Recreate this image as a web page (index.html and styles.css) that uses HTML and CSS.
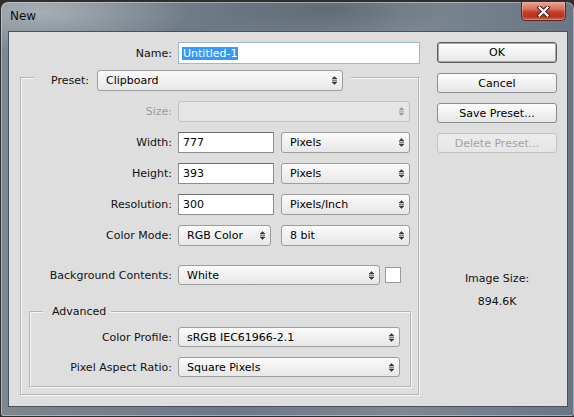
FILE: index.html
```html
<!DOCTYPE html>
<html>
<head>
<meta charset="utf-8">
<title>New</title>
<link rel="stylesheet" href="styles.css">
</head>
<body>
<div class="window">
  <div class="titlebar">
    <span class="title">New</span>
    <div class="close">
      <svg width="13" height="11" viewBox="0 0 13 11">
        <path d="M2.5 1.5 L10.5 9.5 M10.5 1.5 L2.5 9.5" stroke="#4b1f1a" stroke-width="4.2" stroke-linecap="square" fill="none"/>
        <path d="M2.5 1.5 L10.5 9.5 M10.5 1.5 L2.5 9.5" stroke="#ffffff" stroke-width="2.2" stroke-linecap="square" fill="none"/>
      </svg>
    </div>
  </div>
  <div class="client">
    <div class="main">
      <div class="row name-row">
        <span class="lbl lbl-top">Name:</span>
        <div class="field input name-input"><span class="hl">Untitled-1</span></div>
      </div>

      <div class="group">
        <div class="group-head">
          <span class="head-lbl">Preset:</span>
          <div class="field select preset">Clipboard<svg class="arr" width="7" height="9" viewBox="0 0 7 9"><path d="M1 3 L3.5 0.5 L6 3 Z M1 4.5 H6 M1 6 L3.5 8.5 L6 6 Z" fill="#3a3a3a" stroke="#3a3a3a" stroke-width="0.6"/></svg></div>
        </div>

        <div class="row first">
          <span class="lbl lbl-g disabled">Size:</span>
          <div class="field select dis size"><svg class="arr" width="7" height="9" viewBox="0 0 7 9"><path d="M1 3 L3.5 0.5 L6 3 Z M1 4.5 H6 M1 6 L3.5 8.5 L6 6 Z" fill="#9a9a9a" stroke="#9a9a9a" stroke-width="0.6"/></svg></div>
        </div>
        <div class="row">
          <span class="lbl lbl-g">Width:</span>
          <div class="field input num">777</div>
          <div class="field select unit">Pixels<svg class="arr" width="7" height="9" viewBox="0 0 7 9"><path d="M1 3 L3.5 0.5 L6 3 Z M1 4.5 H6 M1 6 L3.5 8.5 L6 6 Z" fill="#3a3a3a" stroke="#3a3a3a" stroke-width="0.6"/></svg></div>
        </div>
        <div class="row">
          <span class="lbl lbl-g">Height:</span>
          <div class="field input num">393</div>
          <div class="field select unit">Pixels<svg class="arr" width="7" height="9" viewBox="0 0 7 9"><path d="M1 3 L3.5 0.5 L6 3 Z M1 4.5 H6 M1 6 L3.5 8.5 L6 6 Z" fill="#3a3a3a" stroke="#3a3a3a" stroke-width="0.6"/></svg></div>
        </div>
        <div class="row">
          <span class="lbl lbl-g">Resolution:</span>
          <div class="field input num">300</div>
          <div class="field select unit">Pixels/Inch<svg class="arr" width="7" height="9" viewBox="0 0 7 9"><path d="M1 3 L3.5 0.5 L6 3 Z M1 4.5 H6 M1 6 L3.5 8.5 L6 6 Z" fill="#3a3a3a" stroke="#3a3a3a" stroke-width="0.6"/></svg></div>
        </div>
        <div class="row">
          <span class="lbl lbl-g">Color Mode:</span>
          <div class="field select mode">RGB Color<svg class="arr" width="7" height="9" viewBox="0 0 7 9"><path d="M1 3 L3.5 0.5 L6 3 Z M1 4.5 H6 M1 6 L3.5 8.5 L6 6 Z" fill="#3a3a3a" stroke="#3a3a3a" stroke-width="0.6"/></svg></div>
          <div class="field select unit bits">8 bit<svg class="arr" width="7" height="9" viewBox="0 0 7 9"><path d="M1 3 L3.5 0.5 L6 3 Z M1 4.5 H6 M1 6 L3.5 8.5 L6 6 Z" fill="#3a3a3a" stroke="#3a3a3a" stroke-width="0.6"/></svg></div>
        </div>
        <div class="row bg-row">
          <span class="lbl lbl-g">Background Contents:</span>
          <div class="field select bg">White<svg class="arr" width="7" height="9" viewBox="0 0 7 9"><path d="M1 3 L3.5 0.5 L6 3 Z M1 4.5 H6 M1 6 L3.5 8.5 L6 6 Z" fill="#3a3a3a" stroke="#3a3a3a" stroke-width="0.6"/></svg></div>
          <div class="swatch"></div>
        </div>

        <div class="adv">
          <div class="adv-head">Advanced</div>
          <div class="row arow first-a">
            <span class="lbl lbl-a">Color Profile:</span>
            <div class="field select wide">sRGB IEC61966-2.1<svg class="arr" width="7" height="9" viewBox="0 0 7 9"><path d="M1 3 L3.5 0.5 L6 3 Z M1 4.5 H6 M1 6 L3.5 8.5 L6 6 Z" fill="#3a3a3a" stroke="#3a3a3a" stroke-width="0.6"/></svg></div>
          </div>
          <div class="row arow">
            <span class="lbl lbl-a">Pixel Aspect Ratio:</span>
            <div class="field select wide">Square Pixels<svg class="arr" width="7" height="9" viewBox="0 0 7 9"><path d="M1 3 L3.5 0.5 L6 3 Z M1 4.5 H6 M1 6 L3.5 8.5 L6 6 Z" fill="#3a3a3a" stroke="#3a3a3a" stroke-width="0.6"/></svg></div>
          </div>
        </div>
      </div>
    </div>

    <div class="side">
      <div class="btn default">OK</div>
      <div class="btn">Cancel</div>
      <div class="btn">Save Preset...</div>
      <div class="btn disabled-btn">Delete Preset...</div>
      <div class="info">Image Size:<br>894.6K</div>
    </div>
  </div>
</div>
</body>
</html>
```

FILE: styles.css
```css
* {
  box-sizing: border-box;
}

html,
body {
  margin: 0;
  padding: 0;
}

body {
  width: 574px;
  height: 417px;
  overflow: hidden;
  background: #2e2e2e;
  font-family: "DejaVu Sans", sans-serif;
  font-size: 11px;
  color: #111;
}

.window {
  margin: 2px 0 0 1px;
  width: 573px;
  height: 414px;
  padding: 0 6px 9px 7px;
  border-radius: 7px 7px 2px 2px;
  background:
    radial-gradient(ellipse 150px 40px at 40px 10px, rgba(205, 210, 214, 0.55), rgba(205, 210, 214, 0)),
    radial-gradient(ellipse 120px 30px at 330px 8px, rgba(70, 80, 90, 0.45), rgba(70, 80, 90, 0)),
    linear-gradient(90deg, #7c8790 0%, #6c7884 40%, #7d8892 70%, #697683 100%);
  box-shadow: inset 0 0 0 1px rgba(230, 236, 240, 0.45);
}

.titlebar {
  height: 29px;
  display: flex;
  align-items: flex-start;
}

.title {
  padding-left: 2px;
  line-height: 29px;
  font-size: 12px;
  color: #111;
}

.close {
  margin-left: auto;
  margin-right: 2px;
  width: 45px;
  height: 19px;
  display: flex;
  align-items: center;
  justify-content: center;
  border: 1px solid #5b2720;
  border-top: none;
  border-radius: 0 0 5px 5px;
  background: linear-gradient(180deg, #e9a493 0%, #d8705c 40%, #c2402c 55%, #b8331f 80%, #d0674f 100%);
  box-shadow: inset 0 0 0 1px rgba(255, 200, 190, 0.35);
}

.client {
  width: 560px;
  height: 376px;
  border: 1px solid #46525c;
  background: #dedede;
  display: flex;
}

.main {
  width: 411px;
}

.side {
  margin-left: 17px;
  width: 120px;
  padding-top: 10px;
  display: flex;
  flex-direction: column;
}

.row {
  display: flex;
  align-items: center;
  margin-top: 10px;
  height: 21px;
}

.name-row {
  height: 22px;
}

.lbl {
  text-align: right;
  margin-right: 6px;
  white-space: nowrap;
}

.lbl-top {
  width: 163px;
}

.lbl-g {
  width: 151px;
}

.lbl-a {
  width: 142px;
}

.disabled {
  color: #9c9c9c;
}

.field {
  height: 100%;
  display: flex;
  align-items: center;
  white-space: nowrap;
  color: #000;
}

.input {
  background: #ffffff;
  border: 1px solid #8e8e8e;
  border-top-color: #6f6f6f;
  padding-left: 4px;
}

.name-input {
  width: 242px;
  border-color: #9ab7d3;
  padding-left: 3px;
}

.hl {
  background: #3399ff;
  color: #ffffff;
  line-height: 13px;
  padding: 0 1px;
}

.select {
  background: linear-gradient(180deg, #fbfbfb 0%, #f1f1f1 50%, #e7e7e7 100%);
  border: 1px solid #9d9d9d;
  border-radius: 3px;
  padding-left: 8px;
  padding-right: 4px;
}

.arr {
  margin-left: auto;
  flex: none;
}

.dis {
  background: #e5e5e5;
  border-color: #c2c2c2;
}

.size {
  width: 232px;
}

.num {
  width: 96px;
}

.unit {
  width: 129px;
  margin-left: 7px;
}

.mode {
  width: 93px;
}

.bits {
  margin-left: 10px;
}

.bg-row {
  margin-top: 19px;
  height: 20px;
}

.bg {
  width: 202px;
}

.swatch {
  margin-left: 5px;
  width: 16px;
  height: 16px;
  background: #ffffff;
  border: 1px solid #9a9a9a;
}

.wide {
  width: 222px;
}

.group {
  margin: 13px 1px 0 11px;
  height: 318px;
  border: 1px solid #b4b4b4;
  box-shadow: inset 1px 1px 0 #f6f6f6, 1px 1px 0 #f6f6f6;
}

.group-head {
  margin: -8px 0 0 13px;
  height: 21px;
  width: 317px;
  padding: 0 8px 0 17px;
  background: #dedede;
  display: flex;
  align-items: center;
}

.head-lbl {
  width: 46px;
}

.preset {
  width: 246px;
}

.first {
  margin-top: 10px;
}

.adv {
  margin: 26px 7px 0 8px;
  height: 76px;
  border: 1px solid #b4b4b4;
  box-shadow: inset 1px 1px 0 #f6f6f6, 1px 1px 0 #f6f6f6;
}

.adv-head {
  margin: -7px 0 0 13px;
  width: 68px;
  height: 13px;
  line-height: 13px;
  padding-left: 9px;
  background: #dedede;
}

.arow {
  height: 20px;
}

.first-a {
  margin-top: 9px;
}

.btn {
  height: 20px;
  margin-top: 10px;
  display: flex;
  align-items: center;
  justify-content: center;
  border: 1px solid #8c8c8c;
  border-radius: 3px;
  background: linear-gradient(180deg, #fdfdfd 0%, #f2f2f2 50%, #e6e6e6 100%);
  color: #000;
}

.btn.default {
  margin-top: 0;
  height: 21px;
  border-color: #5c5c5c;
  box-shadow: inset 0 0 0 1px #a8a8a8;
}

.disabled-btn {
  color: #a3a3a3;
  border-color: #c3c3c3;
  background: linear-gradient(180deg, #ececec 0%, #e6e6e6 100%);
}

.info {
  margin-top: 114px;
  line-height: 23px;
  text-align: center;
  color: #111;
}
```
